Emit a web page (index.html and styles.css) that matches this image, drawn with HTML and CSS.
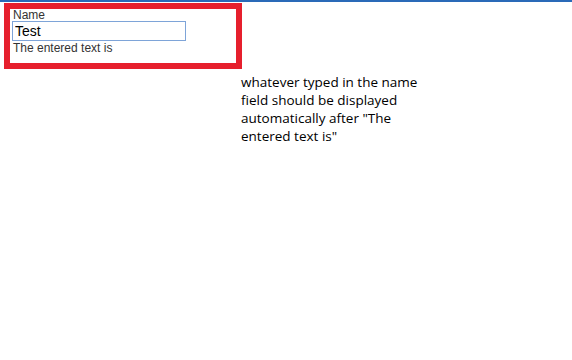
FILE: index.html
```html
<!DOCTYPE html>
<html lang="en">
<head>
  <meta charset="UTF-8">
  <title>Entered text</title>
  <link rel="stylesheet" href="styles.css">
</head>
<body>
  <div class="topbar"></div>
  <div class="box">
    <label for="name">Name</label>
    <input type="text" id="name" value="Test">
    <div class="output">The entered text is <span id="echo"></span></div>
  </div>
  <p class="note">whatever typed in the name field should be displayed automatically after "The entered text is"</p>
</body>
</html>
```
FILE: styles.css
```css
body {
  margin: 0;
  background: #fff;
  font-family: "Liberation Sans", Arial, sans-serif;
}

.topbar {
  height: 2px;
  background-color: #2a6ab8;
}

.box {
  width: 223px;
  height: 54px;
  margin: 1px 0 0 4px;
  padding: 0 0 0 3px;
  border: 6px solid #e61f2d;
  color: #333;
  font-size: 12px;
}

.box label {
  display: block;
  line-height: 12px;
}

.box input {
  display: block;
  box-sizing: border-box;
  width: 174px;
  height: 20px;
  margin: 0 0 0 -1px;
  padding: 0 2px;
  border: 1px solid #7ea4d8;
  font-family: "Liberation Sans", Arial, sans-serif;
  font-size: 14px;
  color: #000;
  outline: none;
}

.output {
  line-height: 14px;
}

.note {
  width: 190px;
  margin: 4px 0 0 241px;
  font-family: "Open Sans", sans-serif;
  font-size: 13.5px;
  line-height: 18px;
  color: #000;
}
```
